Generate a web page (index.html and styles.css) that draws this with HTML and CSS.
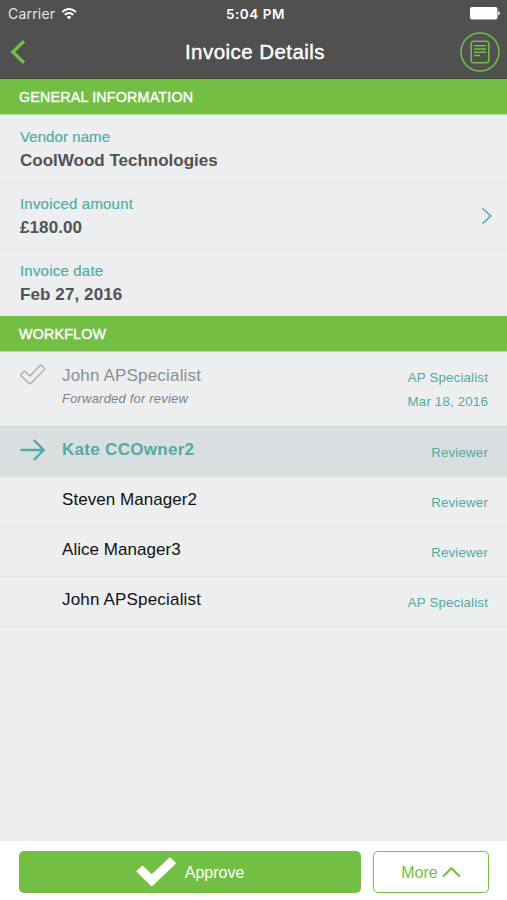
FILE: index.html
```html
<!DOCTYPE html>
<html lang="en">
<head>
<meta charset="utf-8">
<title>Invoice Details</title>
<link rel="stylesheet" href="styles.css">
</head>
<body>
<div class="screen">
  <header class="top">
    <div class="status">
      <div class="carrier"><span class="carrier-name">Carrier</span>
        <svg width="16" height="12" viewBox="0 0 16 12" fill="none" stroke="#fff" stroke-width="2"><path d="M1.2 4.2C5-.1 11-.1 14.8 4.2M3.8 6.9c2.4-2.5 6-2.5 8.4 0"/><path d="M8 11.3 5.6 8.9c1.4-1.3 3.4-1.3 4.8 0z" fill="#fff" stroke="none"/></svg>
      </div>
      <div class="clock">5:04 PM</div>
      <svg class="battery" width="30" height="13" viewBox="0 0 30 13" fill="#fff"><rect width="27.5" height="12.5" rx="2"/><path d="M28.2 4.2c2.2.6 2.2 3.6 0 4.2z"/></svg>
    </div>
    <nav class="nav">
      <svg class="back" width="16" height="24" viewBox="0 0 16 24" fill="none" stroke="#72bf44" stroke-width="3.4"><path d="M15 1.2 3.8 12 15 22.8"/></svg>
      <h1 class="title">Invoice Details</h1>
      <svg class="doc" width="40" height="40" viewBox="0 0 40 40" fill="none" stroke="#72bf44" stroke-width="1.5"><circle cx="20" cy="20" r="19"/><rect x="11.2" y="9.2" width="17.6" height="21.6" rx="2.5"/><path d="M14 13.8h12M14 17h12M14 20.2h12M14 23.4h6"/></svg>
    </nav>
  </header>
  <main class="content">
    <h2 class="section"><span>GENERAL INFORMATION</span></h2>
    <div class="field first"><div><div class="label vendor">Vendor name</div><div class="value company">CoolWood Technologies</div></div></div>
    <div class="field"><div><div class="label">Invoiced amount</div><div class="value">£180.00</div></div>
      <svg width="12" height="18" viewBox="0 0 12 18" fill="none" stroke="#52aaa3" stroke-width="1.6"><path d="m1.5 1.5 8.3 7.5-8.3 7.5"/></svg>
    </div>
    <div class="field last"><div><div class="label">Invoice date</div><div class="value">Feb 27, 2016</div></div></div>
    <h2 class="section"><span>WORKFLOW</span></h2>
    <div class="step done">
      <svg class="mark" width="26" height="22" viewBox="0 0 26 22" fill="none" stroke="#a5abad" stroke-width="1.3" stroke-linejoin="round"><path d="M1.2 10.3 3.6 7.8Q4.5 6.9 5.4 7.8L9.8 12 19.8 1.8Q20.8.8 21.8 1.8L24.2 4.1Q25.1 5 24.2 5.9L11 19.3Q10 20.2 9 19.3L1.2 12.1Q.3 11.2 1.2 10.3Z"/></svg>
      <div class="who"><div class="name">John APSpecialist</div><div class="note">Forwarded for review</div></div>
      <div class="role"><div>AP Specialist</div><div>Mar 18, 2016</div></div>
    </div>
    <div class="step current">
      <svg class="mark" width="26" height="22" viewBox="0 0 26 22" fill="none" stroke="#52aaa3" stroke-width="2.3" stroke-linecap="round" stroke-linejoin="round"><path d="M1.5 11h22M14.5 1.6l9.3 9.4-9.3 9.4"/></svg>
      <div class="who"><div class="name">Kate CCOwner2</div></div><div class="role">Reviewer</div>
    </div>
    <div class="step"><div class="mark"></div><div class="who"><div class="name manager">Steven Manager2</div></div><div class="role">Reviewer</div></div>
    <div class="step"><div class="mark"></div><div class="who"><div class="name manager">Alice Manager3</div></div><div class="role">Reviewer</div></div>
    <div class="step"><div class="mark"></div><div class="who"><div class="name">John APSpecialist</div></div><div class="role">AP Specialist</div></div>
  </main>
  <footer class="actions">
    <button class="approve"><svg width="40" height="30" viewBox="0 0 40 30" fill="#fff" stroke="#fff" stroke-width="2" stroke-linejoin="round"><path d="M1.5 14.2 6.5 9.7 15.8 18.5 34 1.5 38.8 6.2 15.8 28.2Z"/></svg><span>Approve</span></button>
    <button class="more"><span>More</span><svg width="19" height="12" viewBox="0 0 19 12" fill="none" stroke="#72bf44" stroke-width="2.1"><path d="m1 10.6 8.4-8.4 8.4 8.4"/></svg></button>
  </footer>
</div>
</body>
</html>
```

FILE: styles.css
```css
* { box-sizing: border-box; }
body { margin: 0; font-family: "Liberation Sans", Arial, sans-serif; }
h1, h2 { margin: 0; }
svg { display: block; flex: none; }
.screen { width: 507px; height: 900px; display: flex; flex-direction: column; background: #eceef0; overflow: hidden; }
.top { height: 79px; background: #505050; border-bottom: 1px solid #3c4537; color: #fff; }
.status { height: 27px; display: grid; grid-template-columns: 1fr auto 1fr; align-items: center; padding: 0 7px 0 8px; font-family: Inter, sans-serif; font-size: 14px; }
.carrier { display: flex; align-items: center; gap: 6px; color: #e6e6e6; }
.carrier-name { letter-spacing: .2px; }
.clock { font-weight: 600; font-size: 13.5px; letter-spacing: .55px; padding-left: 3px; }
.battery { justify-self: end; }
.nav { height: 50px; display: grid; grid-template-columns: 1fr auto 1fr; align-items: center; padding: 0 7px 0 9px; }
.title { font-size: 20.5px; font-weight: 400; -webkit-text-stroke: .4px #fff; letter-spacing: .45px; padding-left: 1px; }
.doc { justify-self: end; }
.content { flex: 1; }
.section { height: 36px; padding: 1px 19px 0; display: flex; align-items: center; background: #72bf44; border-bottom: 1px solid #b5dc9d; color: #fff; font-size: 14.3px; letter-spacing: .18px; font-weight: 400; -webkit-text-stroke: .4px #fff; }
.field { height: 67px; border-bottom: 1px solid #dddfe0; padding: 11px 14px 0 20px; display: flex; justify-content: space-between; }
.field.first { height: 68px; padding-top: 12px; }
.field.last { height: 66px; border-bottom: 0; }
.field svg { margin-top: 13px; }
.label { font-size: 15px; line-height: 20px; letter-spacing: .2px; color: #52aaa3; -webkit-text-stroke: .2px #52aaa3; }
.vendor { letter-spacing: .08px; }
.value { font-size: 17px; font-weight: 700; line-height: 22px; margin-top: 3px; letter-spacing: .1px; color: #505254; }
.company { letter-spacing: 0; }
.step { height: 50px; display: flex; border-bottom: 1px solid #dddfe0; padding: 0 19px 0 20px; }
.mark { width: 26px; flex: none; margin: 12px 16px 0 0; }
.who { flex: 1; padding-top: 12px; }
.name { font-size: 17px; line-height: 22px; letter-spacing: .18px; color: #111; }
.manager { letter-spacing: .05px; }
.role { font-size: 13.3px; line-height: 24px; letter-spacing: .17px; padding-top: 14px; text-align: right; color: #52aaa3; }
.done { height: 75px; border-bottom-color: #cdd4d6; }
.done .who { padding-top: 13px; }
.done .name { color: #888e92; }
.note { font-size: 13px; line-height: 18px; letter-spacing: .2px; font-style: italic; margin-top: 3px; color: #7c8286; }
.current { background: #d9dfe1; }
.current .name { color: #52aaa3; font-weight: 700; letter-spacing: .3px; }
.actions { height: 59px; background: #fff; padding: 10px 18px 7px 19px; display: flex; gap: 12px; }
button { font: 16px "Liberation Sans", Arial, sans-serif; border-radius: 5px; padding: 0; display: flex; align-items: center; justify-content: center; }
button span { padding-top: 2px; }
.approve { width: 342px; border: 0; background: #72bf44; color: #fff; gap: 9px; }
.more { width: 116px; border: 1.5px solid #72bf44; background: #fff; color: #72bf44; gap: 4px; }
```
